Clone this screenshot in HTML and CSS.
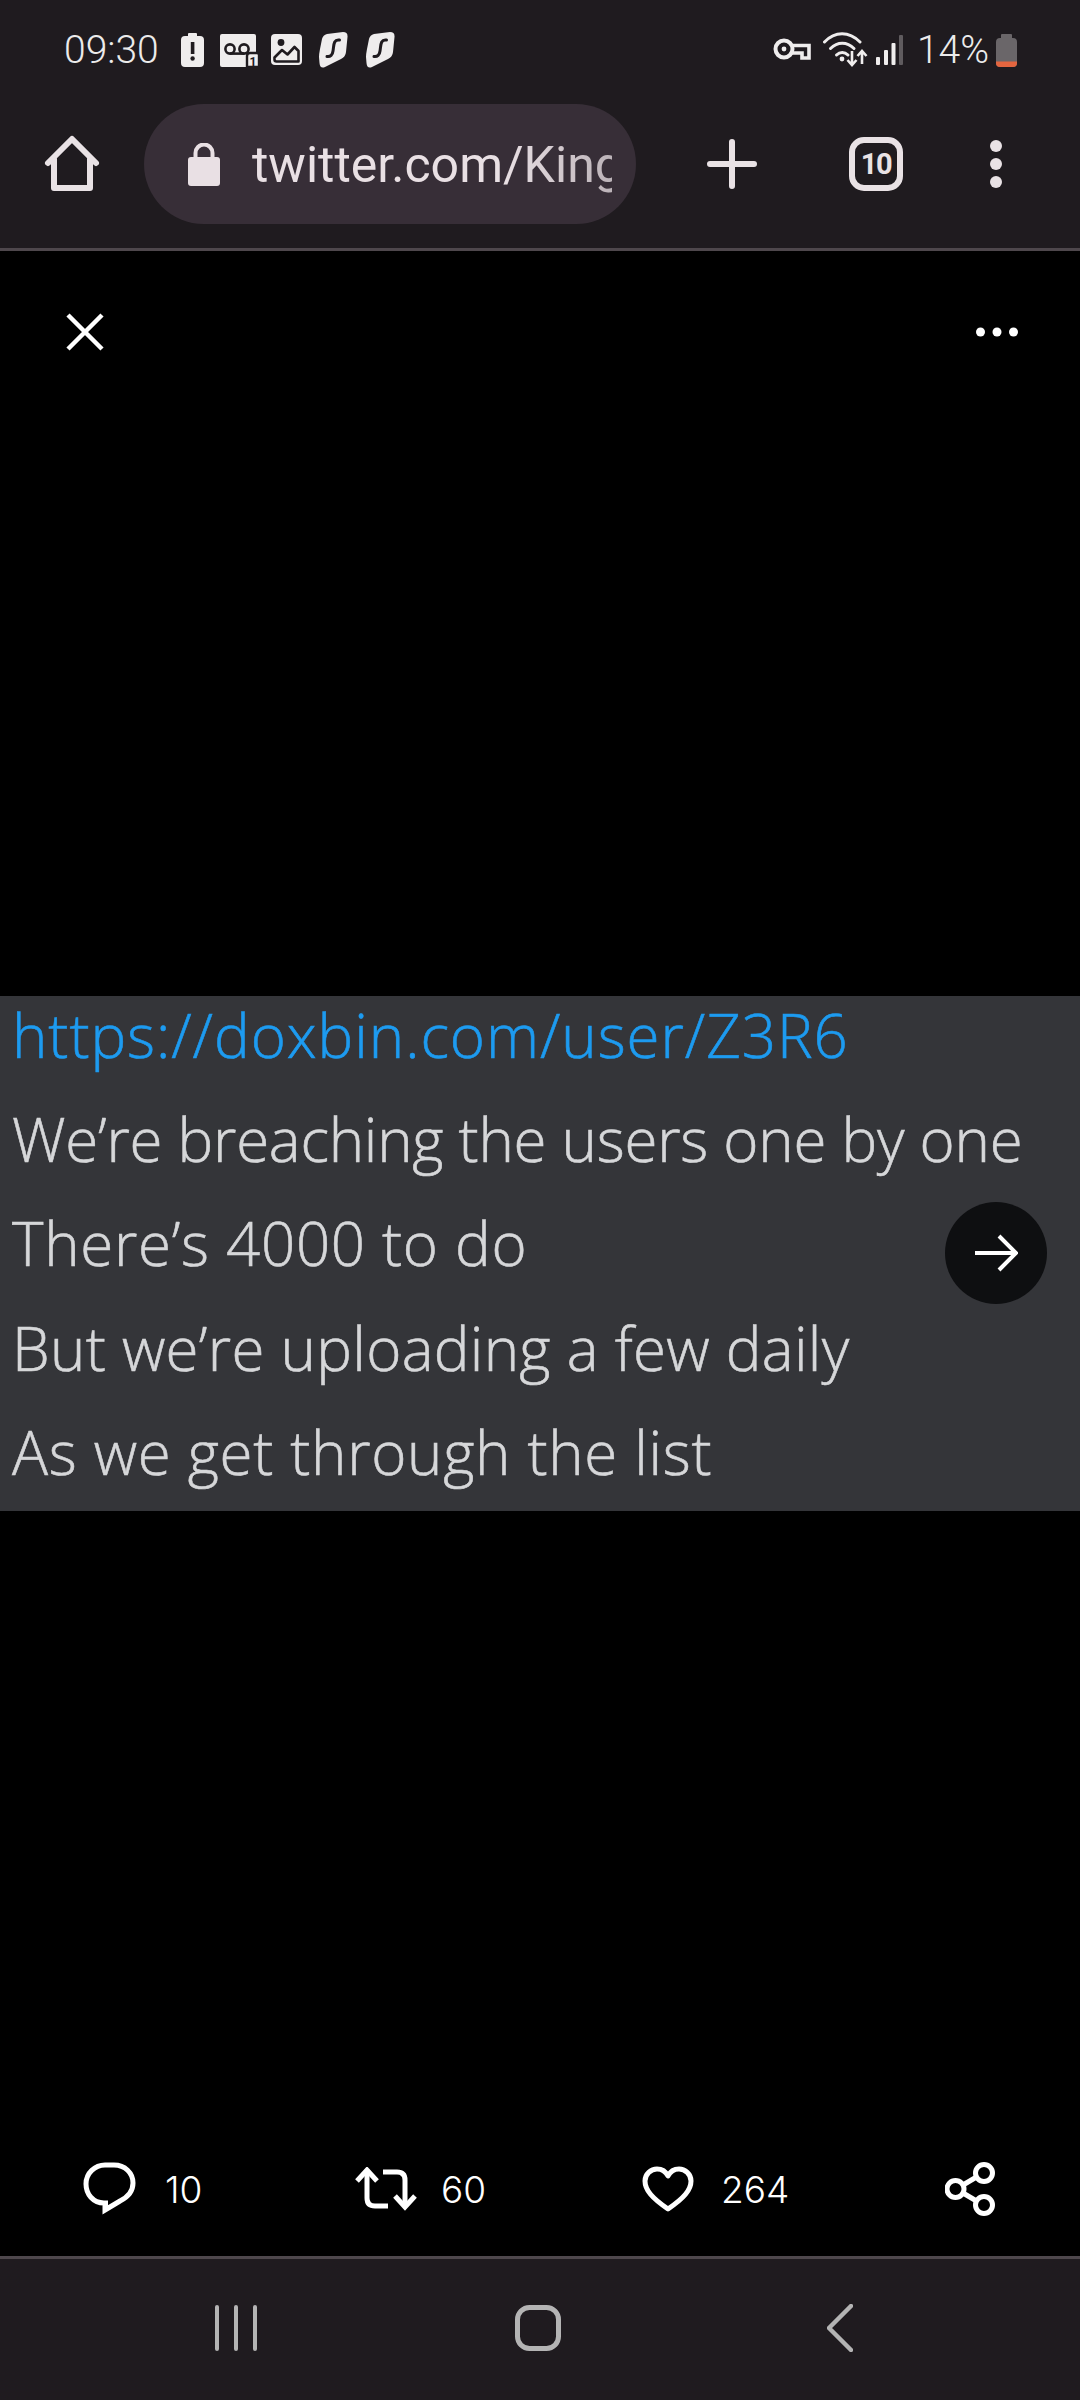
FILE: index.html
```html
<!DOCTYPE html>
<html lang="en">
<head>
    <meta charset="UTF-8">
    <meta name="viewport" content="width=device-width, initial-scale=1.0">
    <title>twitter.com</title>
    <link rel="stylesheet" href="styles.css">
</head>
<body>
    <div class="phone">
        <!-- Status bar -->
        <div class="status-bar">
            <span class="status-time">09:30</span>
            <div class="status-icons">
                <svg width="27" height="34" viewBox="0 0 27 34">
                    <path d="M8 0h7a1 1 0 0 1 1 1v2h3a4 4 0 0 1 4 4v23a4 4 0 0 1-4 4H4a4 4 0 0 1-4-4V7a4 4 0 0 1 4-4h3V1a1 1 0 0 1 1-1z" fill="#efeded"/>
                    <rect x="9.8" y="9" width="3.6" height="12" fill="#1f1b1f"/>
                    <circle cx="11.6" cy="25.5" r="2.2" fill="#1f1b1f"/>
                </svg>
                <svg width="39" height="34" viewBox="0 0 39 34">
                    <path d="M2 1h32a2 2 0 0 1 2 2v31H2a2 2 0 0 1-2-2V3a2 2 0 0 1 2-2z" fill="#efeded"/>
                    <circle cx="10" cy="16" r="4.6" fill="none" stroke="#1f1b1f" stroke-width="2.6"/>
                    <circle cx="24" cy="16" r="4.6" fill="none" stroke="#1f1b1f" stroke-width="2.6"/>
                    <path d="M10 20.6h14" stroke="#1f1b1f" stroke-width="2.6"/>
                    <path d="M27 34V23a3 3 0 0 1 3-3h7a2 2 0 0 1 2 2v12z" fill="#efeded" stroke="#1f1b1f" stroke-width="2.4"/>
                    <text class="badge-num" x="33" y="32.5" text-anchor="middle">1</text>
                </svg>
                <svg width="36" height="34" viewBox="0 0 36 34">
                    <rect x="0" y="1" width="31" height="31" rx="4" fill="#efeded"/>
                    <circle cx="10" cy="9.5" r="3.4" fill="#1f1b1f"/>
                    <path d="M3.5 24.5 L11 17 L16.5 21.5 L23.5 14 L27.5 18 V28.5 H5.5 Q3.5 28.5 3.5 26.5 Z" fill="#efeded" stroke="#1f1b1f" stroke-width="2.6" stroke-linejoin="round"/>
                </svg>
                <svg width="35" height="36" viewBox="0 0 35 36">
                    <path d="M8 2 L24 0 Q29 0 28.5 5 L27 20 Q26.5 25 22 27 L6 35 Q1 37 0.5 31 L0 25 Q0 22 1 17 L3 7 Q4 3 8 2 Z" fill="#efeded"/>
                    <path d="M20.5 8 C14 7 15 14 14 19 C13.5 23 11.5 25 8 24.5" fill="none" stroke="#1f1b1f" stroke-width="3" stroke-linecap="round"/>
                </svg>
                <svg width="29" height="36" viewBox="0 0 29 36">
                    <path d="M8 2 L24 0 Q29 0 28.5 5 L27 20 Q26.5 25 22 27 L6 35 Q1 37 0.5 31 L0 25 Q0 22 1 17 L3 7 Q4 3 8 2 Z" fill="#efeded"/>
                    <path d="M20.5 8 C14 7 15 14 14 19 C13.5 23 11.5 25 8 24.5" fill="none" stroke="#1f1b1f" stroke-width="3" stroke-linecap="round"/>
                </svg>
            </div>
            <div class="status-right">
                <svg width="43" height="24" viewBox="0 0 43 24">
                    <circle cx="11" cy="11" r="8.5" fill="none" stroke="#efeded" stroke-width="4"/>
                    <circle cx="11" cy="11" r="2.4" fill="#efeded"/>
                    <path d="M19 7.5 H36 V20 H29 V15 H19" fill="none" stroke="#efeded" stroke-width="3.6"/>
                </svg>
                <svg width="46" height="36" viewBox="0 0 46 36">
                    <g fill="none" stroke="#efeded" stroke-width="3" stroke-linecap="round">
                        <path d="M1.5 10 C12 -1 26 -1 37 10"/>
                        <path d="M7.5 16.5 C14.5 9.5 24 9.5 31 16.5"/>
                        <path d="M13.5 23 C17 19.5 21.5 19.5 25 23"/>
                    </g>
                    <circle cx="19" cy="27" r="2.4" fill="#efeded"/>
                    <g fill="none" stroke="#efeded" stroke-width="2.6">
                        <path d="M29 19 V32 M24.5 28 L29 33 L33.5 28"/>
                        <path d="M39 32 V20 M34.5 24 L39 19 L43.5 24"/>
                    </g>
                </svg>
                <svg width="34" height="30" viewBox="0 0 34 30">
                    <rect x="0" y="22" width="4" height="8" rx="1" fill="#efeded"/>
                    <rect x="8" y="15" width="4" height="15" rx="1" fill="#efeded"/>
                    <rect x="15.5" y="8" width="4" height="22" rx="1" fill="#efeded"/>
                    <rect x="23" y="0" width="4" height="30" rx="1" fill="#5f5b5e"/>
                </svg>
                <span class="status-battery-text">14%</span>
                <svg width="21" height="33" viewBox="0 0 21 33">
                    <path d="M6 0h9a1 1 0 0 1 1 1v3h1a4 4 0 0 1 4 4v21a4 4 0 0 1-4 4H4a4 4 0 0 1-4-4V8a4 4 0 0 1 4-4h1V1a1 1 0 0 1 1-1z" fill="#6a6669"/>
                    <path d="M0 27.5h21V29a4 4 0 0 1-4 4H4a4 4 0 0 1-4-4z" fill="#e4653f"/>
                </svg>
            </div>
        </div>

        <!-- Browser toolbar -->
        <div class="toolbar">
            <svg class="tool-home" width="60" height="60" viewBox="0 0 60 60">
                <path d="M6 29 L30 5 L54 29 M12 25 V54 H48 V25" fill="none" stroke="#e9e2e5" stroke-width="6" stroke-linecap="round" stroke-linejoin="round"/>
            </svg>
            <div class="url-pill">
                <svg width="32" height="43" viewBox="0 0 32 43">
                    <path d="M7.5 16 V10 a8.5 8.5 0 0 1 17 0 V16" fill="none" stroke="#e9e0e4" stroke-width="4"/>
                    <rect x="0" y="14" width="32" height="29" rx="3" fill="#e9e0e4"/>
                </svg>
                <span class="url-text">twitter.com/Kingdom</span>
            </div>
            <svg class="tool-plus" width="54" height="54" viewBox="0 0 54 54">
                <path d="M27 5 V49 M5 27 H49" stroke="#e9e2e5" stroke-width="6" stroke-linecap="round"/>
            </svg>
            <div class="tab-count">10</div>
            <svg class="tool-menu" width="12" height="48" viewBox="0 0 12 48">
                <circle cx="6" cy="6" r="6" fill="#e9e2e5"/>
                <circle cx="6" cy="24" r="6" fill="#e9e2e5"/>
                <circle cx="6" cy="42" r="6" fill="#e9e2e5"/>
            </svg>
        </div>

        <!-- Photo viewer -->
        <div class="viewer">
            <div class="viewer-top">
                <svg width="38" height="38" viewBox="0 0 38 38">
                    <path d="M2 2 L36 36 M36 2 L2 36" stroke="#fff" stroke-width="4.5"/>
                </svg>
                <svg width="42" height="10" viewBox="0 0 42 10">
                    <circle cx="4.5" cy="5" r="4.5" fill="#fff"/>
                    <circle cx="21" cy="5" r="4.5" fill="#fff"/>
                    <circle cx="37.5" cy="5" r="4.5" fill="#fff"/>
                </svg>
            </div>

            <div class="tweet-image">
                <div class="tweet-link">https://doxbin.com/user/Z3R6</div>
                <div class="tweet-line-tight">We’re breaching the users one by one</div>
                <div>There’s 4000 to do</div>
                <div class="tweet-line-mid">But we’re uploading a few daily</div>
                <div>As we get through the list</div>
                <div class="next-btn">
                    <svg width="44" height="38" viewBox="0 0 44 38">
                        <path d="M1 19 H41 M25 2 L42 19 L25 36" fill="none" stroke="#fff" stroke-width="4"/>
                    </svg>
                </div>
            </div>

            <div class="actions">
                <div class="action">
                    <svg width="58" height="54" viewBox="0 0 58 54">
                        <path d="M25 41 H21 C10 41 3 32 3 22 C3 11 12 3 22 3 H31 C42 3 50 11 50 21 C50 31 43 36 37 39 L22 48 V41 Z" fill="none" stroke="#fff" stroke-width="5"/>
                    </svg>
                    <span>10</span>
                </div>
                <div class="action">
                    <svg width="62" height="44" viewBox="0 0 62 44">
                        <g fill="none" stroke="#fff" stroke-width="5">
                            <path d="M12 3 V31 Q12 39 20 39 H33"/>
                            <path d="M2 14 L12 3 L22 14"/>
                            <path d="M28 5 H42 Q50 5 50 13 V40"/>
                            <path d="M40 29 L50 40 L60 29"/>
                        </g>
                    </svg>
                    <span>60</span>
                </div>
                <div class="action">
                    <svg width="55" height="46" viewBox="0 0 55 46">
                        <path d="M26 43 C10 32 3 24 3 15 C3 8 9 3 15 3 C20 3 24 6 26 10 C28 6 32 3 37 3 C43 3 49 8 49 15 C49 24 42 32 26 43 Z" fill="none" stroke="#fff" stroke-width="5" stroke-linejoin="round"/>
                    </svg>
                    <span>264</span>
                </div>
                <div class="action">
                    <svg width="50" height="54" viewBox="0 0 50 54">
                        <g fill="none" stroke="#fff" stroke-width="5">
                            <circle cx="39" cy="11" r="8.5"/>
                            <circle cx="10.5" cy="27" r="8.5"/>
                            <circle cx="39" cy="43" r="8.5"/>
                            <path d="M18 23 L31.5 15 M18 31 L31.5 39"/>
                        </g>
                    </svg>
                </div>
            </div>
        </div>

        <!-- Android nav bar -->
        <div class="nav-bar">
            <svg width="42" height="46" viewBox="0 0 42 46">
                <path d="M2 2 V44 M21 2 V44 M40 2 V44" stroke="#b4b4b4" stroke-width="4" stroke-linecap="round"/>
            </svg>
            <svg width="46" height="46" viewBox="0 0 46 46">
                <rect x="2.5" y="2.5" width="41" height="41" rx="12" fill="none" stroke="#b4b4b4" stroke-width="5"/>
            </svg>
            <svg width="26" height="48" viewBox="0 0 26 48">
                <path d="M24 2 L2 24 L24 46" fill="none" stroke="#b4b4b4" stroke-width="4.5" stroke-linecap="round" stroke-linejoin="round"/>
            </svg>
        </div>
    </div>
</body>
</html>
```

FILE: styles.css
```css
* {
    box-sizing: border-box;
}

body {
    margin: 0;
    background: #000;
    font-family: 'Roboto', sans-serif;
}

svg {
    display: block;
    flex-shrink: 0;
}

.phone {
    width: 1080px;
    height: 2400px;
    display: flex;
    flex-direction: column;
    background: #1f1b1f;
    overflow: hidden;
}

/* Status bar */
.status-bar {
    height: 80px;
    padding: 20px 63px 0 64px;
    display: flex;
    align-items: center;
    color: #ecebeb;
    font-size: 39px;
    font-weight: 300;
}

.status-time {
    width: 117px;
}

.status-icons {
    display: flex;
    align-items: center;
    gap: 12px;
}

.status-right {
    margin-left: auto;
    display: flex;
    align-items: center;
    gap: 7px;
}

.badge-num {
    font-family: 'Roboto', sans-serif;
    font-size: 12px;
    font-weight: 700;
    fill: #1f1b1f;
}

/* Browser toolbar */
.toolbar {
    height: 171px;
    padding-left: 42px;
    display: flex;
    align-items: center;
    border-bottom: 3px solid #4e474c;
}

.url-pill {
    width: 492px;
    height: 120px;
    margin-left: 42px;
    padding: 0 24px 0 44px;
    display: flex;
    align-items: center;
    gap: 32px;
    border-radius: 60px;
    background: #372e37;
}

.url-text {
    flex: 1;
    padding-top: 2px;
    overflow: hidden;
    white-space: nowrap;
    color: #e9e0e4;
    font-size: 50px;
    -webkit-mask-image: linear-gradient(to right, #000 70%, rgba(0, 0, 0, 0.75) 100%);
    mask-image: linear-gradient(to right, #000 70%, rgba(0, 0, 0, 0.75) 100%);
}

.tool-plus {
    margin-left: 69px;
}

.tab-count {
    width: 54px;
    height: 54px;
    margin-left: 90px;
    display: flex;
    align-items: center;
    justify-content: center;
    border: 6px solid #e9e2e5;
    border-radius: 15px;
    color: #e9e2e5;
    font-size: 29px;
    font-weight: 700;
    letter-spacing: -1.5px;
}

.tool-menu {
    margin-left: 87px;
}

/* Photo viewer */
.viewer {
    flex: 1;
    display: grid;
    grid-template-rows: 1fr auto 1fr;
    background: #000;
}

.viewer-top {
    height: 162px;
    padding: 0 62px 0 66px;
    display: flex;
    align-items: center;
    justify-content: space-between;
}

.tweet-image {
    position: relative;
    height: 515px;
    padding-left: 12px;
    overflow: hidden;
    background: #343539;
    color: #d6d7d9;
    font-family: 'Open Sans', sans-serif;
    font-size: 60px;
    font-weight: 300;
    line-height: 104.6px;
    letter-spacing: 0.7px;
    white-space: nowrap;
    -webkit-text-stroke: 0.6px;
}

.tweet-link {
    margin-bottom: 11.5px;
    color: #1d9bf0;
    line-height: 79px;
    letter-spacing: 0.95px;
}

.tweet-line-tight {
    letter-spacing: -0.25px;
}

.tweet-line-mid {
    letter-spacing: 0.3px;
}

.next-btn {
    position: absolute;
    top: 206px;
    right: 33px;
    width: 102px;
    height: 102px;
    display: flex;
    align-items: center;
    justify-content: center;
    border-radius: 50%;
    background: #0e0f11;
}

.actions {
    align-self: end;
    height: 134px;
    padding-left: 83px;
    display: grid;
    grid-template-columns: 272px 287px 303px auto;
    align-items: center;
}

.action {
    display: flex;
    align-items: center;
    gap: 24px;
    color: #fff;
    font-family: 'Inter', sans-serif;
    font-size: 37px;
    font-weight: 300;
}

/* Android nav bar */
.nav-bar {
    height: 144px;
    padding: 0 89px 3px 85px;
    display: grid;
    grid-template-columns: repeat(3, 302px);
    justify-items: center;
    align-items: center;
    border-top: 3px solid #4e474c;
}
```
